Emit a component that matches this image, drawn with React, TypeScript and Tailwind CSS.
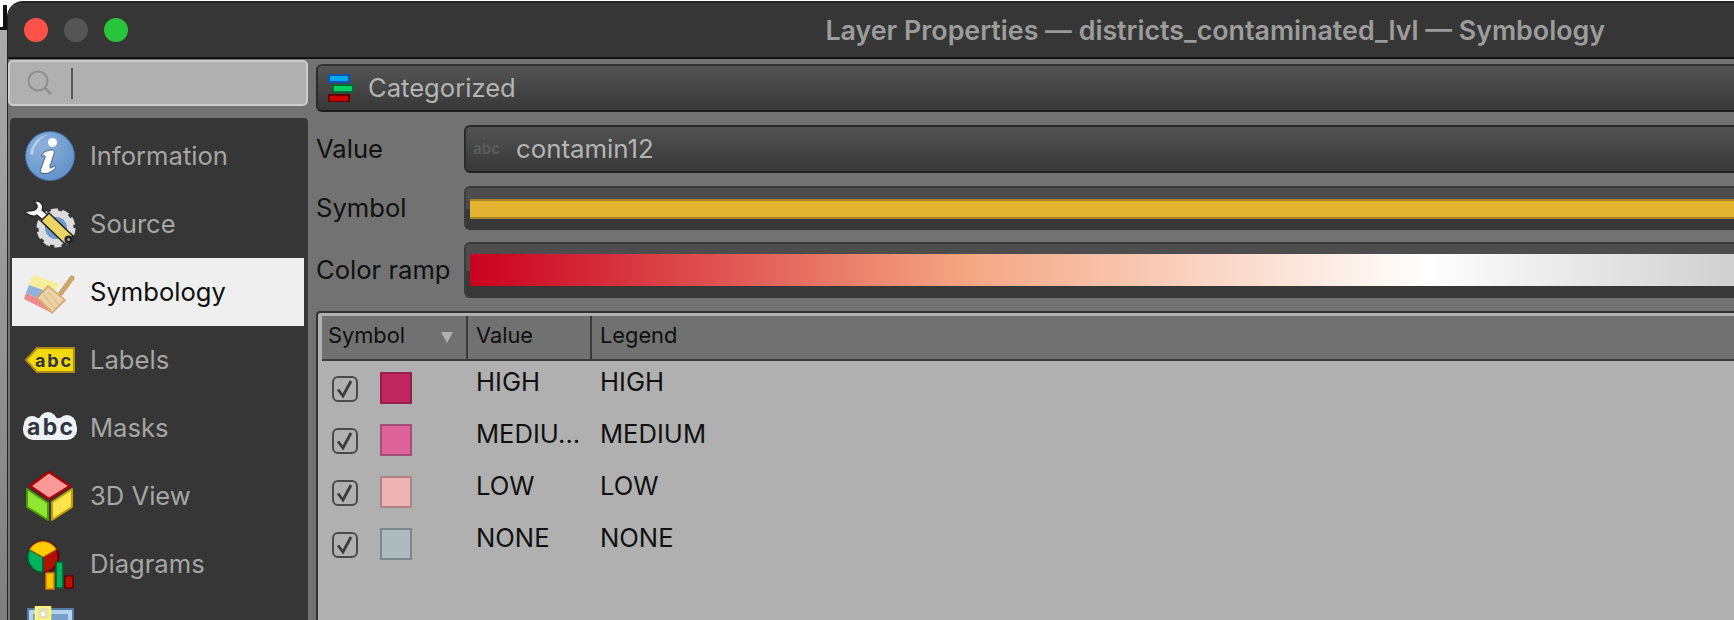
import React from 'react';

const FONT = "font-['Inter','Noto_Sans',sans-serif]";

const InfoIcon = () => (
  <svg viewBox="0 0 52 52" className="h-[52px] w-[52px]">
    <defs>
      <radialGradient id="infoFill" cx="35%" cy="30%" r="80%">
        <stop offset="0%" stopColor="#8db2dc" />
        <stop offset="100%" stopColor="#5f90c8" />
      </radialGradient>
    </defs>
    <circle cx="26" cy="26" r="24.5" fill="url(#infoFill)" stroke="#3f6ea6" strokeWidth="1" />
    <path d="M6 24C8 13 15 6 25 4 16 8 10 15 9 25Z" fill="#b9d0ea" />
    <circle cx="28.5" cy="12.5" r="4.5" fill="#fff" />
    <path d="M18 24c3-3 7-4.500 11-4 1.500.5 1.500 2 1 4l-4 12c-.5 2 .5 2.500 2 1.500l3-2c.5 2 .5 2.500-1 4-3 3-7 4.500-11 4-2.500-.5-3-2.500-2-5l4-11c.5-2-.5-2.500-2-1.500l-1 .5Z" fill="#fff" stroke="#2c4a72" strokeWidth="0.8" />
  </svg>
);

const SourceIcon = () => (
  <svg viewBox="0 0 52 52" className="h-[52px] w-[52px]">
    <circle cx="32" cy="30" r="14" fill="none" stroke="#dcdcdc" strokeWidth="7" />
    <circle cx="32" cy="30" r="17.500" fill="none" stroke="#dcdcdc" strokeWidth="4" strokeDasharray="7 3.990" />
    <circle cx="32" cy="30" r="11" fill="#6f9bd0" />
    <path d="M1 14C6 18 10 19 13 17L20 23 25 18 18 12C20 7 17 3 10 3 12 6 15 8 12 11 9 14 6 12 1 14Z" fill="#fff" stroke="#222" strokeWidth="1.200" />
    <path d="M17 23L25 15 49 38 41 46Z" fill="#ecd566" stroke="#1e1e1e" strokeWidth="1.500" />
    <circle cx="44.500" cy="41.500" r="4" fill="#222" />
    <circle cx="44.500" cy="41.500" r="1.600" fill="#999" />
  </svg>
);

const SymbologyIcon = () => (
  <svg viewBox="0 0 52 52" className="h-[52px] w-[52px]">
    <path d="M9 9L36 18 28 27 5 19Z" fill="#f6ee9a" />
    <path d="M5 19L28 27 24 37 2 27Z" fill="#8fb3da" />
    <path d="M2 27L24 37 26 46 0 33Z" fill="#f08a8a" />
    <path d="M37 27L48 12" stroke="#cfa466" strokeWidth="5" strokeLinecap="round" />
    <path d="M24 20L41 34 28 47 13 32Z" fill="#ecd2a6" stroke="#cfa466" strokeWidth="1.500" />
    <path d="M20 29L31 43M24 26L35 39M16 33L27 44" stroke="#d6b27c" strokeWidth="1" />
  </svg>
);

const LabelsIcon = () => (
  <svg viewBox="0 0 52 52" className="h-[52px] w-[52px]">
    <path d="M2 26L13 14H50V38H13Z" fill="#f4d90c" stroke="#b08d0c" strokeWidth="2" />
    <text x="11" y="33" fontSize="18" fontWeight="700" fill="#2e3440" fontFamily="Inter, sans-serif" textLength="36">abc</text>
  </svg>
);

const MasksIcon = () => (
  <svg viewBox="0 0 52 52" className="h-[52px] w-[52px] overflow-visible">
    <rect x="-1" y="16" width="54" height="22" rx="10" fill="#eef2fb" />
    <circle cx="8" cy="22" r="8" fill="#eef2fb" />
    <circle cx="24" cy="19" r="9" fill="#eef2fb" />
    <circle cx="43" cy="22" r="9" fill="#eef2fb" />
    <text x="3" y="33" fontSize="23" fontWeight="700" fill="#2e3440" fontFamily="Inter, sans-serif" textLength="46">abc</text>
  </svg>
);

const ThreeDIcon = () => (
  <svg viewBox="0 0 52 52" className="h-[52px] w-[52px]">
    <path d="M25 2L46 16 25 29 6 16Z" fill="#fb9898" stroke="#a80000" strokeWidth="2.500" strokeLinejoin="round" />
    <path d="M3 19L24 33V50L3 37Z" fill="#8ee534" stroke="#4f9a00" strokeWidth="2" strokeLinejoin="round" />
    <path d="M48 19L28 32V50L48 37Z" fill="#ffe44d" stroke="#c09a00" strokeWidth="2" strokeLinejoin="round" />
  </svg>
);

const DiagramsIcon = () => (
  <svg viewBox="0 0 52 52" className="h-[52px] w-[52px]">
    <circle cx="19" cy="19" r="15.500" fill="#b50f00" stroke="#640000" strokeWidth="2" />
    <path d="M19 19L5.600 11.300A15.500 15.500 0 0 0 19 34.500Z" fill="#00b35a" stroke="#005c36" strokeWidth="2" strokeLinejoin="round" />
    <path d="M19 19L5.600 11.300A15.500 15.500 0 0 1 32.400 11.300Z" fill="#ffcc00" stroke="#c47a00" strokeWidth="1" />
    <rect x="22" y="35" width="8" height="16" fill="#ffc400" stroke="#d87a00" strokeWidth="1.500" />
    <rect x="32" y="24" width="7" height="26" fill="#00b35a" stroke="#005c36" strokeWidth="1.500" />
    <rect x="41" y="38" width="8" height="12" fill="#c01000" stroke="#640000" strokeWidth="1.500" />
  </svg>
);

const NextIcon = () => (
  <svg viewBox="0 0 52 52" className="h-[52px] w-[52px]">
    <rect x="4" y="3" width="45" height="30" fill="#b5d3ec" stroke="#547aa5" strokeWidth="2" />
    <rect x="9" y="8" width="35" height="6" fill="#78a0cc" />
    <rect x="12" y="0" width="14" height="14" fill="#e8e0b0" stroke="#ffff66" strokeWidth="2.500" />
    <rect x="17" y="6" width="4" height="4" fill="#fff" />
  </svg>
);

const navItems = [
  { label: 'Information', icon: <InfoIcon /> },
  { label: 'Source', icon: <SourceIcon /> },
  { label: 'Symbology', icon: <SymbologyIcon />, active: true },
  { label: 'Labels', icon: <LabelsIcon /> },
  { label: 'Masks', icon: <MasksIcon /> },
  { label: '3D View', icon: <ThreeDIcon /> },
  { label: 'Diagrams', icon: <DiagramsIcon /> },
  { label: '', icon: <NextIcon /> },
];

const categories = [
  { value: 'HIGH', legend: 'HIGH', fill: 'bg-[#c0275f] border-[#97204f]' },
  { value: 'MEDIU...', legend: 'MEDIUM', fill: 'bg-[#dd6298] border-[#a34f78]' },
  { value: 'LOW', legend: 'LOW', fill: 'bg-[#efb5b5] border-[#a98585]' },
  { value: 'NONE', legend: 'NONE', fill: 'bg-[#adbbbf] border-[#7d8a8d]' },
];

const Sidebar = () => (
  <div className="flex w-[300px] shrink-0 flex-col">
    <div className="flex h-[46px] items-center rounded-[5px] border-2 border-[#cdcdcd] bg-[#b0b0b0] pl-[17px]">
      <svg viewBox="0 0 26 26" className="h-[26px] w-[26px]" fill="none" stroke="#8e8e8e" strokeWidth="2">
        <circle cx="11" cy="11" r="9.500" />
        <path d="M18 18L24 24" strokeWidth="2.500" />
      </svg>
      <div className="ml-[18px] h-[31px] w-[2px] bg-[#555555]" />
    </div>
    <nav className="mt-[12px] ml-[2px] flex-1 overflow-hidden rounded-t-[4px] bg-[#363636] px-[2px] pt-[4px]">
      {navItems.map((item) => (
        <div
          key={item.label || 'next'}
          className={`flex h-[68px] w-[292px] items-center gap-[14px] pl-[12px] text-[25.6px] ${
            item.active ? 'bg-[#efefef] text-[#0e0e0e]' : 'text-[#a6a6a6]'
          }`}
        >
          {item.icon}
          <span>{item.label}</span>
        </div>
      ))}
    </nav>
  </div>
);

const Table = () => (
  <div className="mt-[13px] flex-1 rounded-tl-[4px] border-t-2 border-l-2 border-[#333333] bg-[#b0b0b0] pt-[3px] pl-[4px]">
    <div className="flex h-[45px] border-b-2 border-[#3a3a3a] bg-[#717171] text-[21.8px] text-[#0f0f0f]">
      <div className="flex w-[146px] items-center justify-between border-r-2 border-[#3a3a3a] pr-[13px] pb-[4px] pl-[6px]">
        <span>Symbol</span>
        <span className="mt-[4px] h-0 w-0 border-x-[6px] border-t-[11px] border-x-transparent border-t-[#b0b0b0]" />
      </div>
      <div className="flex w-[124px] items-center border-r-2 border-[#3a3a3a] pb-[4px] pl-[8px]">Value</div>
      <div className="flex items-center pb-[4px] pl-[8px]">Legend</div>
    </div>
    <div className="pt-[9px] text-[25.6px] text-[#101010]">
      {categories.map((row) => (
        <div key={row.legend} className="flex h-[52px]">
          <div className="mt-[6px] ml-[10px] flex h-[26px] w-[26px] items-center justify-center rounded-[6px] border-2 border-[#4a4a4a]">
            <svg viewBox="0 0 20 20" className="h-[20px] w-[20px]" fill="none" stroke="#3c3c3c" strokeWidth="2.800">
              <path d="M3 10.500L8 17 16 2" />
            </svg>
          </div>
          <div className={`mt-[2px] ml-[22px] h-[32px] w-[32px] border-2 ${row.fill}`} />
          <div className="mt-[2px] ml-[64px] w-[124px] leading-[20px]">{row.value}</div>
          <div className="mt-[2px] leading-[20px]">{row.legend}</div>
        </div>
      ))}
    </div>
  </div>
);

const Main = () => (
  <div className="flex min-w-0 flex-1 flex-col pt-[4px] pl-[8px]">
    <div className="flex h-[48px] items-center gap-[14px] rounded-l-[6px] border-y-2 border-l-2 border-t-[#333333] border-b-[#1e1e1e] border-l-[#2a2a2a] bg-gradient-to-b from-[#545454] to-[#383838] pl-[10px] text-[25.6px] text-[#b5b5b5]">
      <svg viewBox="0 0 26 28" className="h-[28px] w-[26px]">
        <rect x="1" y="1" width="20" height="7" fill="#00a8f0" stroke="#0a52b8" strokeWidth="2" />
        <rect x="5" y="11" width="20" height="7" fill="#00d060" stroke="#006838" strokeWidth="2" />
        <rect x="1" y="21" width="20" height="7" fill="#c80000" stroke="#640000" strokeWidth="2" />
      </svg>
      <span>Categorized</span>
    </div>
    <div className="mt-[13px] flex items-center">
      <div className="w-[148px] shrink-0 text-[25.6px] text-[#101010]">Value</div>
      <div className="flex h-[48px] flex-1 items-center rounded-l-[6px] border-y-2 border-l-2 border-t-[#2a2a2a] border-b-[#222222] border-l-[#2a2a2a] bg-gradient-to-b from-[#525252] to-[#383838] pl-[7px] text-[25.8px] text-[#b5b5b5]">
        <span className="w-[43px] text-[15px] font-bold text-[#5c5c5c]">abc</span>
        <span>contamin12</span>
      </div>
    </div>
    <div className="mt-[13px] flex items-center">
      <div className="w-[148px] shrink-0 text-[25.6px] text-[#101010]">Symbol</div>
      <div className="flex h-[44px] flex-1 items-center rounded-l-[6px] border-t-2 border-l-2 border-[#3c3c3c] bg-[linear-gradient(#4d4d4d_50%,#383838_50%)] pl-[4px]">
        <div className="h-[20px] w-full border-y-2 border-y-[#a88428] bg-[#e3b332]" />
      </div>
    </div>
    <div className="mt-[12px] flex items-center">
      <div className="w-[148px] shrink-0 text-[25.6px] text-[#101010]">Color ramp</div>
      <div className="flex h-[56px] flex-1 items-center rounded-l-[6px] border-t-2 border-l-2 border-[#3c3c3c] bg-[linear-gradient(#4d4d4d_50%,#383838_50%)] pb-[2px] pl-[4px]">
        <div className="h-[32px] w-full bg-[linear-gradient(90deg,#ca0020_0%,#f4a582_39%,#ffffff_75.7%,#d0d0d0_100%)]" />
      </div>
    </div>
    <Table />
  </div>
);

export default function App() {
  return (
    <div className={`flex h-[620px] w-[1734px] overflow-hidden bg-white ${FONT}`}>
      <div className="flex w-[7px] shrink-0 flex-col">
        <div className="h-[27px] pt-[5px] pl-[3px]">
          <div className="h-[22px] w-[4px] bg-[#111111]" />
        </div>
        <div className="h-[3px] bg-[#111111]" />
        <div className="flex-1 bg-gradient-to-b from-[#ababab] to-[#7f7f7f]" />
      </div>
      <div className="mt-[1px] flex min-w-0 flex-1 flex-col overflow-hidden rounded-tl-[16px] border-t-2 border-l border-[#222222] bg-[#727272]">
        <header className="flex h-[56px] shrink-0 items-center border-b-2 border-[#111111] bg-[#363636]">
          <div className="ml-[16px] flex gap-[16px]">
            <span className="h-[24px] w-[24px] rounded-full bg-[#ff5147]" />
            <span className="h-[24px] w-[24px] rounded-full bg-[#555555]" />
            <span className="h-[24px] w-[24px] rounded-full bg-[#27c43c]" />
          </div>
          <div className="ml-auto pr-[129px] text-[26.8px] font-semibold text-[#9c9c9c]">
            Layer Properties — districts_contaminated_lvl — Symbology
          </div>
        </header>
        <div className="flex min-h-0 flex-1 pt-[1px]">
          <Sidebar />
          <Main />
        </div>
      </div>
    </div>
  );
}
